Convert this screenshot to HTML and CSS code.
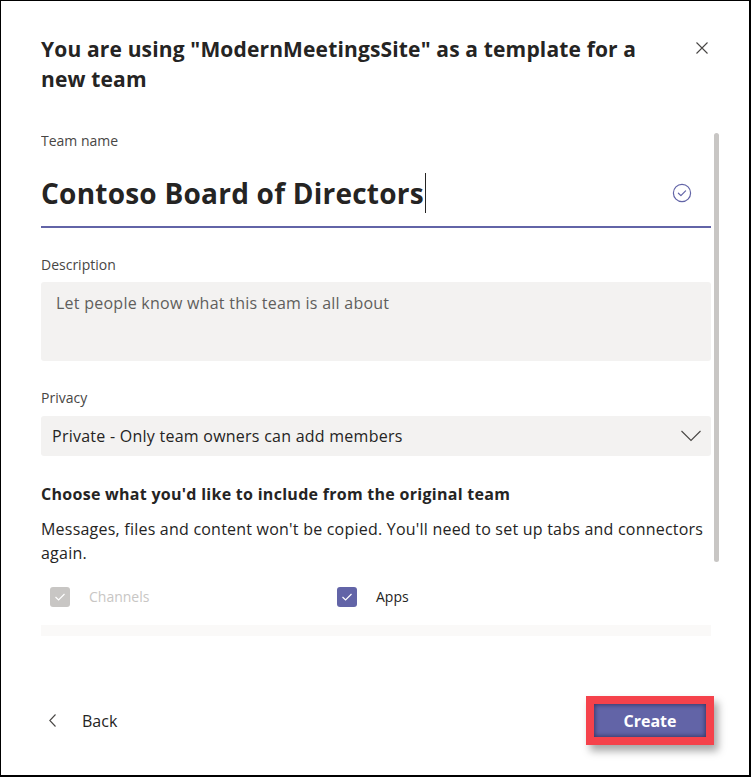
FILE: index.html
```html
<!DOCTYPE html>
<html lang="en">
<head>
<meta charset="utf-8">
<title>Create team from template</title>
<link rel="stylesheet" href="styles.css">
</head>
<body>
<div class="frame">
  <header class="header">
    <h1 class="title">You are using "ModernMeetingsSite" as a template for a new team</h1>
    <button class="close" aria-label="Close">
      <svg width="12" height="12" viewBox="0 0 12 12"><path d="M0.5 0.5 L11.5 11.5 M11.5 0.5 L0.5 11.5" stroke="#484644" stroke-width="1.1" fill="none"/></svg>
    </button>
  </header>
  <div class="body">
    <div class="content">
      <div class="label">Team name</div>
      <div class="name-input">
        <span class="name-text">Contoso Board of Directors</span><span class="caret"></span>
        <svg class="check" width="20" height="20" viewBox="0 0 20 20"><circle cx="10" cy="10" r="8.6" stroke="#6264a7" stroke-width="1.2" fill="none"/><path d="M6.4 10.2 L8.9 12.6 L13.6 7.9" stroke="#6264a7" stroke-width="1.2" fill="none" stroke-linecap="round" stroke-linejoin="round"/></svg>
      </div>
      <div class="label label-gap">Description</div>
      <div class="textarea">Let people know what this team is all about</div>
      <div class="label label-gap">Privacy</div>
      <div class="select">
        <span>Private - Only team owners can add members</span>
        <svg width="20" height="12" viewBox="0 0 20 12"><path d="M0.5 1 L10 10.5 L19.5 1" stroke="#484644" stroke-width="1.1" fill="none"/></svg>
      </div>
      <div class="section-title">Choose what you'd like to include from the original team</div>
      <p class="section-text">Messages, files and content won't be copied. You'll need to set up tabs and connectors again.</p>
      <div class="options">
        <div class="option disabled">
          <span class="box"><svg width="12" height="10" viewBox="0 0 12 10"><path d="M1.5 5 L4.6 8 L10.5 2" stroke="#fff" stroke-width="1.2" fill="none"/></svg></span>
          <span class="option-label">Channels</span>
        </div>
        <div class="option">
          <span class="box checked"><svg width="12" height="10" viewBox="0 0 12 10"><path d="M1.5 5 L4.6 8 L10.5 2" stroke="#fff" stroke-width="1.2" fill="none"/></svg></span>
          <span class="option-label">Apps</span>
        </div>
      </div>
      <div class="next-block"></div>
    </div>
    <div class="scroll-track"></div>
  </div>
  <footer class="footer">
    <button class="back">
      <svg width="7" height="13" viewBox="0 0 7 13"><path d="M6.5 0.5 L0.8 6.5 L6.5 12.5" stroke="#484644" stroke-width="1.1" fill="none"/></svg>
      <span>Back</span>
    </button>
    <button class="create">Create</button>
  </footer>
</div>
</body>
</html>
```

FILE: styles.css
```css
* { box-sizing: border-box; }
html, body { margin: 0; padding: 0; background: #fff; }
body { font-family: "Segoe UI", "Open Sans", "Noto Sans", sans-serif; color: #252423; }

.frame {
  width: 751px;
  height: 777px;
  border: 1px solid #000;
  border-right-width: 2px;
  border-bottom-width: 2px;
  display: flex;
  flex-direction: column;
  background: #fff;
}

.header {
  display: flex;
  align-items: flex-start;
  padding: 33px 41px 0 40px;
}
.title {
  margin: 0;
  width: 620px;
  font-size: 21px;
  line-height: 30px;
  font-weight: 700;
  letter-spacing: 0.15px;
  color: #252423;
}
.close {
  margin: 8px 0 0 auto;
  padding: 0;
  border: 0;
  background: none;
  width: 12px;
  height: 12px;
  display: flex;
}

.body {
  display: flex;
  margin-top: 36px;
  padding-left: 40px;
}
.content {
  width: 670px;
  height: 506px;
  overflow: hidden;
}
.scroll-track {
  width: 5px;
  height: 429px;
  margin: 3px 0 0 3px;
  background: #c8c6c4;
  border-radius: 3px;
}

.label {
  font-size: 14px;
  line-height: 20px;
  padding-top: 1px;
  color: #484644;
}
.label-gap { margin-top: 26px; }

.name-input {
  margin-top: 9px;
  height: 68px;
  border-bottom: 2px solid #6264a7;
  display: flex;
  align-items: center;
  padding-right: 19px;
}
.name-text {
  font-size: 28px;
  line-height: 40px;
  font-weight: 700;
  letter-spacing: 0.23px;
  color: #252423;
}
.caret {
  width: 1px;
  height: 40px;
  background: #252423;
  margin-left: 1px;
}
.check { margin-left: auto; }

.textarea {
  margin-top: 7px;
  height: 79px;
  background: #f3f2f1;
  border-radius: 3px;
  padding: 9px 15px;
  font-size: 16px;
  line-height: 24px;
  letter-spacing: 0.25px;
  color: #605e5c;
}

.select {
  margin-top: 8px;
  height: 40px;
  background: #f3f2f1;
  border-radius: 3px;
  display: flex;
  align-items: center;
  justify-content: space-between;
  padding: 0 10px 0 11px;
  font-size: 16px;
  letter-spacing: 0.25px;
  color: #252423;
}

.section-title {
  margin-top: 26px;
  font-size: 16px;
  line-height: 24px;
  font-weight: 700;
  letter-spacing: 0.28px;
}
.section-text {
  margin: 11px 0 0;
  font-size: 16px;
  line-height: 24px;
  letter-spacing: 0.22px;
  color: #252423;
}

.options {
  margin-top: 22px;
  display: grid;
  grid-template-columns: 287px 287px;
}
.option {
  display: flex;
  align-items: center;
  padding-left: 9px;
  gap: 19px;
  font-size: 14px;
  line-height: 20px;
}
.box {
  width: 20px;
  height: 20px;
  border-radius: 3px;
  background: #c8c6c4;
  display: flex;
  align-items: center;
  justify-content: center;
}
.box.checked { background: #6264a7; }
.option.disabled .option-label { color: #c8c6c4; }

.next-block {
  margin-top: 18px;
  height: 40px;
  background: #faf9f8;
}

.footer {
  margin-top: auto;
  display: flex;
  align-items: center;
  justify-content: space-between;
  padding: 0 43px 38px 48px;
}
.back {
  display: flex;
  align-items: center;
  gap: 26px;
  border: 0;
  background: none;
  padding: 0;
  font-family: inherit;
  font-size: 16px;
  color: #252423;
}
.create {
  width: 112px;
  height: 33px;
  border: 0;
  border-radius: 0;
  background: #6264a7;
  color: #fff;
  font-family: inherit;
  font-size: 16px;
  font-weight: 700;
  box-shadow: inset 0 0 4px 1px rgba(20, 20, 50, 0.55), 0 0 0 8px #f5424b, 4px 6px 8px 8px rgba(0, 0, 0, 0.35);
}
```
